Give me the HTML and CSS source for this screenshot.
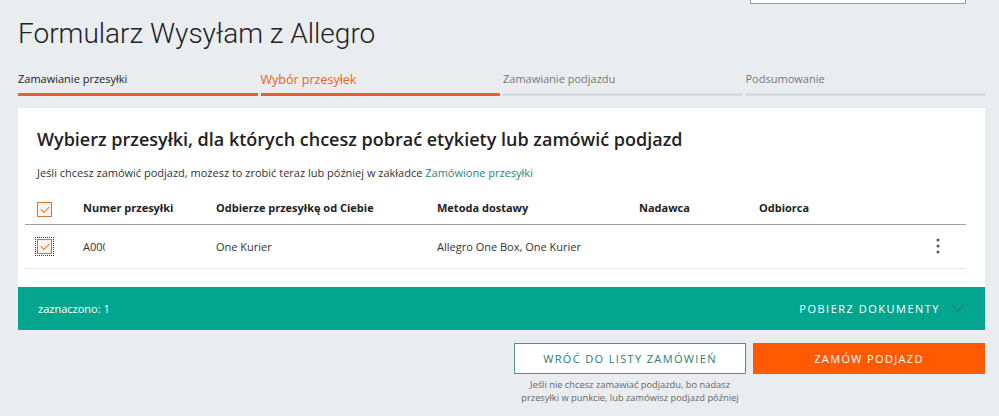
FILE: index.html
```html
<!DOCTYPE html>
<html lang="pl">
<head>
  <meta charset="UTF-8">
  <title>Formularz Wysyłam z Allegro</title>
  <link rel="stylesheet" href="styles.css">
</head>
<body>
  <div class="page">
    <div class="topbar">
      <div class="search-box"></div>
    </div>

    <h1 class="title">Formularz Wysyłam z Allegro</h1>

    <div class="steps">
      <div class="step done">Zamawianie przesyłki</div>
      <div class="step active">Wybór przesyłek</div>
      <div class="step">Zamawianie podjazdu</div>
      <div class="step">Podsumowanie</div>
    </div>

    <div class="card">
      <h2>Wybierz przesyłki, dla których chcesz pobrać etykiety lub zamówić podjazd</h2>
      <p class="info">Jeśli chcesz zamówić podjazd, możesz to zrobić teraz lub później w zakładce <a href="#">Zamówione przesyłki</a></p>

      <table class="shipments">
        <thead>
          <tr>
            <th class="col-check"><span class="checkbox checked"></span></th>
            <th class="col-num">Numer przesyłki</th>
            <th class="col-pick">Odbierze przesyłkę od Ciebie</th>
            <th class="col-method">Metoda dostawy</th>
            <th class="col-sender">Nadawca</th>
            <th class="col-recipient">Odbiorca</th>
            <th class="col-menu"></th>
          </tr>
        </thead>
        <tbody>
          <tr>
            <td class="col-check"><span class="checkbox checked focused"></span></td>
            <td class="col-num"><span class="clip">A000</span></td>
            <td>One Kurier</td>
            <td>Allegro One Box, One Kurier</td>
            <td></td>
            <td></td>
            <td class="col-menu">
              <svg width="4" height="16" viewBox="0 0 4 16"><circle cx="2" cy="2" r="1.5" fill="#555"/><circle cx="2" cy="8" r="1.5" fill="#555"/><circle cx="2" cy="14" r="1.5" fill="#555"/></svg>
            </td>
          </tr>
        </tbody>
      </table>
    </div>

    <div class="selection-bar">
      <span>zaznaczono: 1</span>
      <button class="docs">POBIERZ DOKUMENTY
        <svg width="14" height="8" viewBox="0 0 14 8"><path d="M1 1l6 6 6-6" fill="none" stroke="#1b8a7b" stroke-width="1.6"/></svg>
      </button>
    </div>

    <div class="actions">
      <div class="action">
        <button class="btn btn-outline">WRÓĆ DO LISTY ZAMÓWIEŃ</button>
        <p class="hint">Jeśli nie chcesz zamawiać podjazdu, bo nadasz<br>przesyłki w punkcie, lub zamówisz podjazd później</p>
      </div>
      <div class="action">
        <button class="btn btn-primary">ZAMÓW PODJAZD</button>
      </div>
    </div>
  </div>
</body>
</html>
```

FILE: styles.css
```css
* {
  box-sizing: border-box;
}
body {
  margin: 0;
  background-color: #eaedf0;
  font-family: "Open Sans", Arial, sans-serif;
  color: #222;
}
.page {
  width: 985px;
  padding-left: 18px;
}
.topbar {
  height: 4px;
  position: relative;
}
.search-box {
  position: absolute;
  left: 732px;
  top: -10px;
  width: 216px;
  height: 14px;
  background-color: #fff;
  border: 1px solid #9a9a9a;
}
.title {
  margin: 14px 0 0;
  font-family: Roboto, Arial, sans-serif;
  font-weight: 300;
  font-size: 28px;
  line-height: 32px;
  color: #222;
}
.steps {
  display: flex;
  gap: 3px;
  margin-top: 21px;
}
.step {
  flex: 1;
  font-size: 11px;
  color: #777;
  padding-bottom: 5px;
  border-bottom: 3px solid #d8dbdf;
}
.step.done {
  color: #222;
  border-bottom-color: #e8631d;
}
.step.active {
  color: #e8631d;
  font-size: 12.5px;
  border-bottom-color: #e8631d;
}
.card {
  margin-top: 12px;
  background-color: #fff;
  padding: 18px 19px 18px 7px;
}
.card h2 {
  margin: 0 0 0 12px;
  font-size: 18px;
  font-weight: 600;
  line-height: 26px;
  color: #222;
}
.info {
  margin: 13px 0 0 12px;
  font-size: 11px;
  color: #333;
}
.info a {
  color: #1a8a7c;
  text-decoration: none;
}
.shipments {
  width: 100%;
  border-collapse: collapse;
  margin-top: 13px;
}
.shipments th,
.shipments td {
  text-align: left;
  font-size: 11px;
  padding: 0;
  vertical-align: middle;
}
.shipments th {
  font-weight: 700;
  line-height: 16px;
  padding: 7px 0;
  border-bottom: 1px solid #a0a0a0;
}
.shipments td {
  height: 44px;
  color: #333;
  border-bottom: 1px solid #e6e6e6;
}
.shipments .col-check {
  width: 58px;
  padding-left: 12px;
}
.col-num { width: 133px; }
.col-pick { width: 221px; }
.col-method { width: 202px; }
.col-sender { width: 120px; }
.shipments .col-menu {
  width: 30px;
  text-align: center;
}
.col-menu svg {
  display: block;
}
.clip {
  display: inline-block;
  width: 22px;
  overflow: hidden;
  white-space: nowrap;
  vertical-align: middle;
}
.checkbox {
  display: inline-block;
  width: 15px;
  height: 15px;
  border: 1px solid #d9742f;
  background-color: #fdf3ec;
  position: relative;
  vertical-align: middle;
}
.checkbox.checked::after {
  content: "";
  position: absolute;
  left: 3px;
  top: 3px;
  width: 7px;
  height: 4px;
  border-left: 1.5px solid #d9742f;
  border-bottom: 1.5px solid #d9742f;
  transform: rotate(-45deg);
}
.checkbox.focused {
  outline: 1px dotted #333;
  outline-offset: 1px;
}
.selection-bar {
  display: flex;
  justify-content: space-between;
  align-items: center;
  height: 43px;
  padding: 0 20px;
  background-color: #04a58f;
  color: #fff;
  font-size: 11px;
}
.docs {
  display: flex;
  align-items: center;
  gap: 11px;
  background: none;
  border: none;
  color: #fff;
  font-family: "Open Sans", Arial, sans-serif;
  font-size: 11px;
  letter-spacing: 1.5px;
  padding: 0;
}
.actions {
  display: flex;
  justify-content: flex-end;
  gap: 7px;
  margin-top: 13px;
}
.action {
  width: 232px;
  display: flex;
  flex-direction: column;
  align-items: center;
}
.btn {
  width: 100%;
  height: 31px;
  font-family: "Open Sans", Arial, sans-serif;
  font-size: 11px;
  letter-spacing: 1.35px;
  cursor: pointer;
}
.btn-outline {
  background-color: #fff;
  border: 1px solid #5d8b88;
  color: #2a7d76;
}
.btn-primary {
  background-color: #ff5a00;
  border: none;
  color: #fff;
}
.hint {
  margin: 4px 0 0;
  font-size: 9.3px;
  line-height: 13px;
  color: #666;
  text-align: center;
}
```
